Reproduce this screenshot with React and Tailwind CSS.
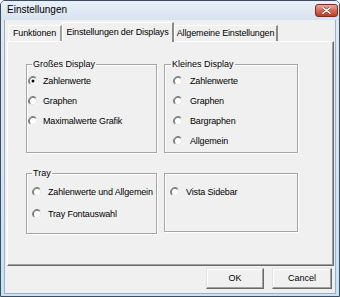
import React from 'react'

const font = { fontFamily: '"Liberation Sans", Arial, sans-serif' }

const Radio = ({ checked }) => (
  <svg width="10" height="10" viewBox="0 0 12 12" className="shrink-0">
    <circle cx="6" cy="6" r="5.5" fill="#ffffff" />
    <path d="M9.9 2.1 A5.5 5.5 0 0 0 2.1 9.9" fill="none" stroke="#808080" strokeWidth="1" />
    <path d="M9.2 2.8 A4.5 4.5 0 0 0 2.8 9.2" fill="none" stroke="#404040" strokeWidth="1" />
    <path d="M9.2 2.8 A4.5 4.5 0 0 1 2.8 9.2" fill="none" stroke="#dcdcdc" strokeWidth="1" />
    {checked && <circle cx="6" cy="6" r="1.8" fill="#000000" />}
  </svg>
)

const Option = ({ label, checked, gap = 'gap-[5px]', h = 'h-[20px]' }) => (
  <div className={`flex items-center ${gap} ${h}`}>
    <Radio checked={checked} />
    <span className="text-[9px] tracking-[-0.15px] leading-none text-black whitespace-nowrap">{label}</span>
  </div>
)

const Group = ({ title, titleClass = 'ml-[5px]', children, className = '' }) => (
  <fieldset className={`border border-[#a5a5a5] shadow-[inset_1px_1px_0_#ffffff,1px_1px_0_#ffffff] ${className}`}>
    <legend className={`${titleClass} px-[1px] text-[9px] leading-[12px] text-black`}>{title}</legend>
    {children}
  </fieldset>
)

const App = () => {
  return (
    <div
      className="w-[340px] h-[297px] flex flex-col border border-[#3d4d61] rounded-t-[5px] bg-gradient-to-b from-[#dfe8f3] via-[#d9e4f1] to-[#c6e3f4] overflow-hidden"
      style={font}
    >
      {/* title bar */}
      <div className="h-[19px] shrink-0 flex items-start bg-gradient-to-b from-[#eaf0f7] to-[#d8e3f0]">
        <span className="pl-[6px] pt-[4px] text-[10px] leading-none text-black">Einstellungen</span>
        <div className="ml-auto mr-[1px] mt-[3px] w-[23px] h-[13px] rounded-[3px] border border-[#7b2e22] bg-gradient-to-b from-[#e9a99a] via-[#d36a55] to-[#c03a25] flex items-center justify-center">
          <svg width="9" height="7" viewBox="0 0 9 7">
            <path d="M1 0.8 L8 6.2 M8 0.8 L1 6.2" stroke="#6b2a20" strokeWidth="2.6" strokeLinecap="round" />
            <path d="M1 0.8 L8 6.2 M8 0.8 L1 6.2" stroke="#ffffff" strokeWidth="1.6" strokeLinecap="round" />
          </svg>
        </div>
      </div>

      {/* body */}
      <div className="flex-1 mx-[3px] mb-[2px] bg-[#f0f0f0] border-x border-b border-[#9fb0c4] flex flex-col">
        {/* tabs */}
        <div className="h-[21px] shrink-0 flex items-end pl-[3px] text-[9px] tracking-[-0.15px] leading-none text-black">
          <div className="w-[54px] h-[16px] border-t border-l border-[#ffffff] border-r-2 border-r-[#a0a0a0] flex items-center justify-center">
            Funktionen
          </div>
          <div className="relative z-10 w-[112px] h-[20px] -mb-[1px] bg-[#f0f0f0] border-t border-l border-[#ffffff] border-r-2 border-r-[#8a8a8a] flex items-center justify-center pb-[1px]">
            Einstellungen der Displays
          </div>
          <div className="w-[104px] h-[16px] border-t border-l border-[#ffffff] border-r-2 border-r-[#8a8a8a] flex items-center justify-center">
            Allgemeine Einstellungen
          </div>
        </div>

        {/* panel */}
        <div className="h-[225px] ml-[2px] mr-[1px] border-t border-l border-[#ffffff] border-r border-b border-r-[#696969] border-b-[#696969] shadow-[inset_-1px_-1px_0_#a0a0a0] pl-[18px] pt-[16px]">
          <div className="grid grid-cols-[131px_134px] gap-x-[7px] gap-y-[14px] items-start">
            <Group title="Großes Display" className="h-[95px]">
              <div className="pt-[1px] pl-[1px]">
                <Option label="Zahlenwerte" checked gap="gap-[5px]" />
                <Option label="Graphen" gap="gap-[5px]" />
                <Option label="Maximalwerte Grafik" gap="gap-[5px]" />
              </div>
            </Group>
            <Group title="Kleines Display" titleClass="ml-[6px]" className="h-[95px]">
              <div className="pt-[1px] pl-[8px]">
                <Option label="Zahlenwerte" gap="gap-[7px]" />
                <Option label="Graphen" gap="gap-[7px]" />
                <Option label="Bargraphen" gap="gap-[7px]" />
                <Option label="Allgemein" gap="gap-[7px]" />
              </div>
            </Group>
            <Group title="Tray" className="h-[67px]">
              <div className="pt-[3px] pl-[5px] flex flex-col gap-[2px]">
                <Option label="Zahlenwerte und Allgemein" gap="gap-[6px]" />
                <Option label="Tray Fontauswahl" gap="gap-[6px]" />
              </div>
            </Group>
            <div className="mt-[6px] h-[59px] border border-[#a5a5a5] shadow-[inset_1px_1px_0_#ffffff,1px_1px_0_#ffffff] pl-[5px] pt-[8px]">
              <Option label="Vista Sidebar" gap="gap-[6px]" />
            </div>
          </div>
        </div>

        {/* buttons */}
        <div className="mt-[2px] flex justify-end gap-[8px] pr-[3px]">
          <button className="w-[58px] h-[21px] bg-[#f0f0f0] border border-t-[#e3e3e3] border-l-[#e3e3e3] border-r-[#696969] border-b-[#696969] shadow-[inset_-1px_-1px_0_#a0a0a0,inset_1px_1px_0_#ffffff] text-[9px] leading-none text-black">
            OK
          </button>
          <button className="w-[60px] h-[21px] bg-[#f0f0f0] border border-t-[#e3e3e3] border-l-[#e3e3e3] border-r-[#696969] border-b-[#696969] shadow-[inset_-1px_-1px_0_#a0a0a0,inset_1px_1px_0_#ffffff] text-[9px] leading-none text-black">
            Cancel
          </button>
        </div>
      </div>
    </div>
  )
}

export default App
